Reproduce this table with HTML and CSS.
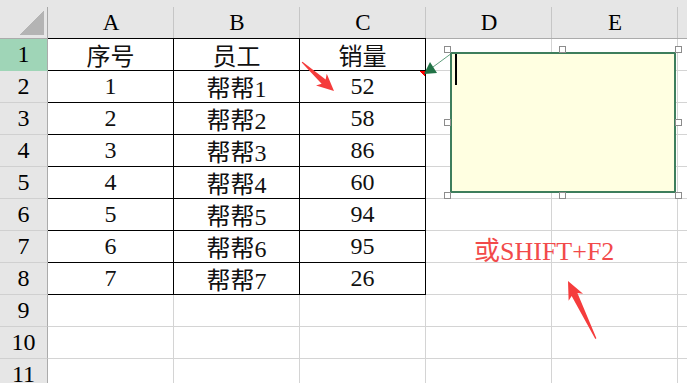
FILE: index.html
```html
<!DOCTYPE html>
<html lang="zh-CN">
<head>
  <meta charset="UTF-8">
  <title>销量</title>
  <link rel="stylesheet" href="styles.css">
</head>
<body>
  <div class="sheet">
    <div class="grid">
      <!-- column headers -->
      <div class="ch corner"></div>
      <div class="ch edge">A</div>
      <div class="ch edge">B</div>
      <div class="ch edge">C</div>
      <div class="ch">D</div>
      <div class="ch">E</div>
      <div class="ch end"></div>

      <div class="rh sel">1</div>
      <div class="cell t">序号</div><div class="cell t">员工</div><div class="cell t">销量</div>
      <div class="cell"></div><div class="cell"></div><div class="cell end"></div>

      <div class="rh">2</div>
      <div class="cell t">1</div><div class="cell t">帮帮1</div><div class="cell t note">52</div>
      <div class="cell"></div><div class="cell"></div><div class="cell end"></div>

      <div class="rh">3</div>
      <div class="cell t">2</div><div class="cell t">帮帮2</div><div class="cell t">58</div>
      <div class="cell"></div><div class="cell"></div><div class="cell end"></div>

      <div class="rh">4</div>
      <div class="cell t">3</div><div class="cell t">帮帮3</div><div class="cell t">86</div>
      <div class="cell"></div><div class="cell"></div><div class="cell end"></div>

      <div class="rh">5</div>
      <div class="cell t">4</div><div class="cell t">帮帮4</div><div class="cell t">60</div>
      <div class="cell"></div><div class="cell"></div><div class="cell end"></div>

      <div class="rh">6</div>
      <div class="cell t">5</div><div class="cell t">帮帮5</div><div class="cell t">94</div>
      <div class="cell"></div><div class="cell"></div><div class="cell end"></div>

      <div class="rh">7</div>
      <div class="cell t">6</div><div class="cell t">帮帮6</div><div class="cell t">95</div>
      <div class="cell"></div><div class="cell"></div><div class="cell end"></div>

      <div class="rh">8</div>
      <div class="cell t">7</div><div class="cell t">帮帮7</div><div class="cell t">26</div>
      <div class="cell"></div><div class="cell"></div><div class="cell end"></div>

      <div class="rh">9</div>
      <div class="cell"></div><div class="cell"></div><div class="cell"></div>
      <div class="cell"></div><div class="cell"></div><div class="cell end"></div>

      <div class="rh">10</div>
      <div class="cell"></div><div class="cell"></div><div class="cell"></div>
      <div class="cell"></div><div class="cell"></div><div class="cell end"></div>

      <div class="rh">11</div>
      <div class="cell"></div><div class="cell"></div><div class="cell"></div>
      <div class="cell"></div><div class="cell"></div><div class="cell end"></div>
    </div>

    <!-- connector from C2 to the comment, plus the two red pointers -->
    <svg class="marks" width="687" height="383" viewBox="0 0 687 383">
      <line x1="452" y1="53" x2="433" y2="67" stroke="#5f9e7c" stroke-width="1"/>
      <polygon points="424,74 430,62 437,73" fill="#217346"/>
      <g transform="translate(334 91) rotate(-137.9)">
        <polygon points="0,0 17,8 14,3 43,0.6 43,-0.6 14,-3 17,-8" fill="#f53c3c"/>
      </g>
      <g transform="translate(568 281) rotate(64.2)">
        <polygon points="0,0 18,8 15,3.2 64,0.6 64,-0.6 15,-3.2 18,-8" fill="#f53c3c"/>
      </g>
    </svg>

    <div class="comment">
      <span class="caret"></span>
      <span class="handle h-tl"></span>
      <span class="handle h-tm"></span>
      <span class="handle h-tr"></span>
      <span class="handle h-ml"></span>
      <span class="handle h-mr"></span>
      <span class="handle h-bl"></span>
      <span class="handle h-bm"></span>
      <span class="handle h-br"></span>
    </div>

    <div class="callout">或SHIFT+F2</div>
  </div>
</body>
</html>
```

FILE: styles.css
```css
body {
  margin: 0;
  background: #fff;
  overflow: hidden;
  color: #000;
}

.sheet {
  position: relative;
  width: 687px;
  height: 383px;
  overflow: hidden;
  font-family: "Liberation Serif", "Noto Sans CJK SC", serif;
}

.grid {
  display: grid;
  grid-template-columns: 48px repeat(5, 126px) 10px;
  grid-template-rows: 39px;
  grid-auto-rows: 32px;
  font-family: "Liberation Serif", "Noto Sans CJK SC", serif;
}

.grid > div {
  box-sizing: border-box;
  display: flex;
  align-items: center;
  justify-content: center;
}

/* column headers: separators start a few px below the top */
.ch {
  background: linear-gradient(#c6c6c6, #c6c6c6) right 7px / 1px calc(100% - 7px) no-repeat, #e6e6e6;
  border-bottom: 1px solid #ababab;
  font-size: 23px;
  padding-top: 7px;
}

.ch.edge {
  border-bottom-color: #000;
}

.ch.end {
  background: #e6e6e6;
}

.ch.corner {
  background:
    linear-gradient(to bottom right, transparent 50%, #b4b4b4 50%) 19px 11px / 25px 24px no-repeat,
    linear-gradient(#a8a8a8, #a8a8a8) right 7px / 1px calc(100% - 7px) no-repeat,
    #e6e6e6;
}

/* row headers */
.rh {
  background: #e6e6e6;
  border-right: 1px solid #ababab;
  border-bottom: 1px solid #d0d0d0;
  font-size: 24px;
}

.rh.sel {
  background: #9fd5b7;
  border-bottom-color: #9fd5b7;
}

.cell {
  border-right: 1px solid #d4d4d4;
  border-bottom: 1px solid #d4d4d4;
  font-size: 24px;
  color: #111;
}

.cell.end {
  border-right: none;
}

.cell.t {
  border-right-color: #000;
  border-bottom-color: #000;
}

/* red corner flag on a cell that carries a comment */
.cell.note {
  background: linear-gradient(to bottom left, #f00 50%, transparent 50%) right top / 6px 6px no-repeat;
}

.marks {
  position: absolute;
  left: 0;
  top: 0;
}

.comment {
  position: absolute;
  left: 450px;
  top: 52px;
  width: 226px;
  height: 141px;
  box-sizing: border-box;
  background: #ffffe1;
  border: 2px solid #3e7e5c;
  padding: 0 0 0 3px;
}

.caret {
  display: block;
  width: 2px;
  height: 31px;
  background: #000;
}

.handle {
  position: absolute;
  width: 7px;
  height: 7px;
  box-sizing: border-box;
  border: 1px solid #8c8c8c;
  background: #fff;
}

.h-tl { left: -8px; top: -8px; }
.h-tm { left: calc(50% - 4px); top: -8px; }
.h-tr { right: -8px; top: -8px; }
.h-ml { left: -8px; top: calc(50% - 4px); }
.h-mr { right: -8px; top: calc(50% - 4px); }
.h-bl { left: -8px; bottom: -8px; }
.h-bm { left: calc(50% - 4px); bottom: -8px; }
.h-br { right: -8px; bottom: -8px; }

.callout {
  position: absolute;
  left: 474px;
  top: 236px;
  font-size: 26px;
  color: #f24a4a;
  line-height: 32px;
}
```
